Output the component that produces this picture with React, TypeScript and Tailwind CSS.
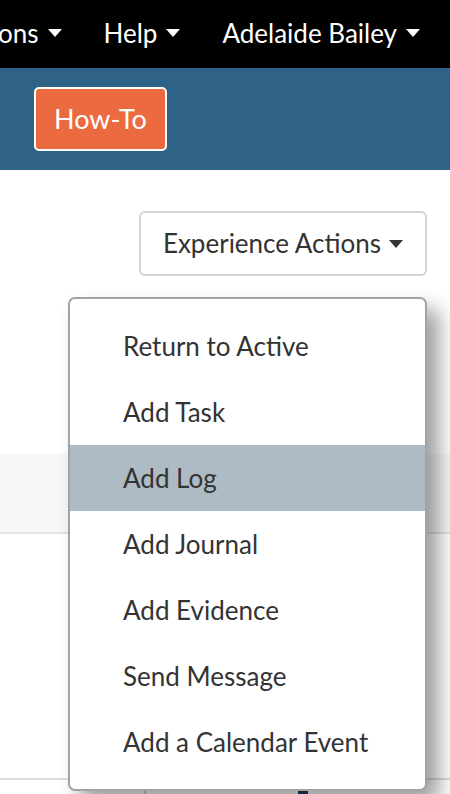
const NAV = ['Actions', 'Help', 'Adelaide Bailey'];

const ITEMS = [
  'Return to Active',
  'Add Task',
  'Add Log',
  'Add Journal',
  'Add Evidence',
  'Send Message',
  'Add a Calendar Event',
];

function Caret({ className }: { className?: string }) {
  return (
    <svg viewBox="0 0 14 8" className={className} aria-hidden="true">
      <path d="M0 0h14L7 8z" fill="currentColor" />
    </svg>
  );
}

export default function App() {
  return (
    <div
      className="relative h-[794px] w-[450px] overflow-hidden bg-white text-[#333]"
      style={{ fontFamily: 'Lato, "Open Sans", sans-serif' }}
    >
      <nav className="flex h-[68px] items-center justify-end gap-[42px] overflow-hidden bg-black pb-[2px] pr-[30px] text-[26px] text-white">
        {NAV.map((label) => (
          <div key={label} className="flex shrink-0 items-center gap-[9px]">
            <span>{label}</span>
            <Caret className="h-[8px] w-[14px]" />
          </div>
        ))}
      </nav>

      <div className="flex h-[102px] items-center bg-[#2e6287] pl-[34px]">
        <button className="flex h-[64px] items-center rounded-[5px] border-2 border-white bg-[#ec6a40] px-[18px] text-[27px] text-white">
          How-To
        </button>
      </div>

      <div className="relative">
        <div className="flex justify-end pr-[23px] pt-[41px]">
          <button className="flex h-[65px] items-center gap-[8px] rounded-[6px] border-2 border-[#d4d4d4] bg-white pl-[22px] pr-[22px] text-[26px] text-[#333]">
            Experience Actions
            <Caret className="h-[8px] w-[14px]" />
          </button>
        </div>

        <div className="mt-[178px] h-[80px] border-b-2 border-[#e2e2e2] bg-[#f7f7f7]" />

        <div className="mt-[244px] flex h-[40px] border-t-2 border-[#dcdcdc]">
          <div className="w-[146px] border-r-2 border-[#cfcfcf]" />
          <div className="relative flex-1">
            <div className="absolute left-[152px] top-[8px] h-[10px] w-[10px] rounded-sm bg-[#1d3a5c]" />
          </div>
        </div>

        <ul className="absolute left-[68px] top-[127px] w-[359px] rounded-[7px] border-2 border-[#a3a3a3] bg-white py-[14px] shadow-[12px_12px_20px_rgba(0,0,0,0.38)]">
          {ITEMS.map((item) => (
            <li
              key={item}
              className={`flex h-[66px] items-center pl-[53px] text-[26px] ${
                item === 'Add Log' ? 'bg-[#aebac4]' : ''
              }`}
            >
              {item}
            </li>
          ))}
        </ul>
      </div>
    </div>
  );
}
